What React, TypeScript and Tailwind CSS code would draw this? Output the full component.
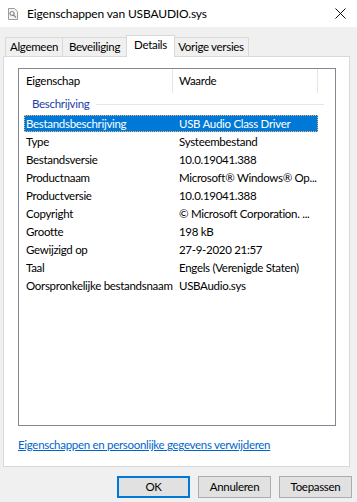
import React from "react";

const FONT = "font-['Segoe_UI','Lato','Liberation_Sans',sans-serif]";

const rows: [string, string][] = [
  ["Type", "Systeembestand"],
  ["Bestandsversie", "10.0.19041.388"],
  ["Productnaam", "Microsoft\u00ae Windows\u00ae Op..."],
  ["Productversie", "10.0.19041.388"],
  ["Copyright", "\u00a9 Microsoft Corporation. ..."],
  ["Grootte", "198 kB"],
  ["Gewijzigd op", "27-9-2020 21:57"],
  ["Taal", "Engels (Verenigde Staten)"],
  ["Oorspronkelijke bestandsnaam", "USBAudio.sys"],
];

function FileIcon() {
  return (
    <svg width="12" height="12" viewBox="0 0 12 12" className="shrink-0">
      <path d="M1.5 0.5h6l3 3v8h-9z" fill="#f4f4f4" stroke="#9a9a9a" />
      <circle cx="5" cy="5.5" r="2" fill="none" stroke="#8a8a8a" strokeWidth="1.2" />
      <path d="M6.5 7l2.5 2.5" stroke="#8a8a8a" strokeWidth="1.3" />
    </svg>
  );
}

export default function App() {
  return (
    <div className={`w-[357px] h-[502px] bg-[#f0f0f0] text-[11.5px] tracking-[-0.3px] text-black ${FONT} overflow-hidden`}>
      {/* Title bar */}
      <div className="h-[27px] bg-white flex items-center pl-[7px] pr-[11px]">
        <FileIcon />
        <span className="ml-[8px] text-[12px] tracking-[-0.15px] leading-none">Eigenschappen van USBAUDIO.sys</span>
        <svg width="11" height="11" viewBox="0 0 11 11" className="ml-auto">
          <path d="M0.5 0.5l10 10M10.5 0.5l-10 10" stroke="#111" strokeWidth="1" />
        </svg>
      </div>

      <div className="pl-[3px]">
        {/* Tabs */}
        <div className="flex items-end h-[29px] pl-[2px]">
          <div className="w-[58px] h-[19px] border border-b-0 border-[#d9d9d9] flex items-center justify-center">Algemeen</div>
          <div className="w-[64px] h-[19px] border border-b-0 border-l-0 border-[#d9d9d9] flex items-center justify-center">Beveiliging</div>
          <div className="relative z-10 -mx-[1px] -mb-px w-[49px] h-[22px] bg-white border border-b-0 border-[#d9d9d9] flex items-center justify-center pb-[3px]">Details</div>
          <div className="w-[75px] h-[19px] border border-b-0 border-l-0 border-[#d9d9d9] flex items-center justify-center">Vorige versies</div>
        </div>

        {/* Panel */}
        <div className="w-[347px] h-[411px] bg-white border border-[#d9d9d9] pl-[14px] pt-[11px]">
          <div className="w-[318px] h-[358px] border border-[#828790]">
            {/* Header */}
            <div className="flex h-[24px] items-center">
              <div className="w-[153px] shrink-0 pl-[7px]">Eigenschap</div>
              <div className="w-px h-full bg-[#e5e5e5]" />
              <div className="w-[144px] shrink-0 pl-[6px]">Waarde</div>
              <div className="w-px h-full bg-[#e5e5e5]" />
            </div>
            {/* Group */}
            <div className="flex items-center h-[22px] pl-[13px] pr-[11px]">
              <span className="text-[#1e3ca8]">Beschrijving</span>
              <div className="flex-1 h-px bg-[#e2e8f2] ml-[6px]" />
            </div>
            {/* Rows */}
            <div className="flex flex-col gap-px pl-[5px]">
              <div className="flex items-center h-[17px] w-[294px] bg-[#0078d7] text-white border border-dotted border-[#f3b66b]">
                <div className="w-[154px] shrink-0 pl-[1px]">Bestandsbeschrijving</div>
                <div className="whitespace-nowrap">USB Audio Class Driver</div>
              </div>
              {rows.map(([k, v]) => (
                <div key={k} className="flex items-center h-[17px] w-[294px]">
                  <div className="w-[155px] shrink-0 pl-[2px] whitespace-nowrap">{k}</div>
                  <div className="whitespace-nowrap">{v}</div>
                </div>
              ))}
            </div>
          </div>
          <a href="#" className="block mt-[11px] leading-[15px] text-[#0066cc] underline">
            Eigenschappen en persoonlijke gegevens verwijderen
          </a>
        </div>

        {/* Buttons */}
        <div className="flex justify-end gap-[8px] mt-[9px] pr-[5px]">
          <button className="w-[73px] h-[22px] bg-[#e1e1e1] border-2 border-[#0078d7]">OK</button>
          <button className="w-[73px] h-[22px] bg-[#e1e1e1] border border-[#adadad]">Annuleren</button>
          <button className="w-[73px] h-[22px] bg-[#e1e1e1] border border-[#adadad]">Toepassen</button>
        </div>
      </div>
    </div>
  );
}
